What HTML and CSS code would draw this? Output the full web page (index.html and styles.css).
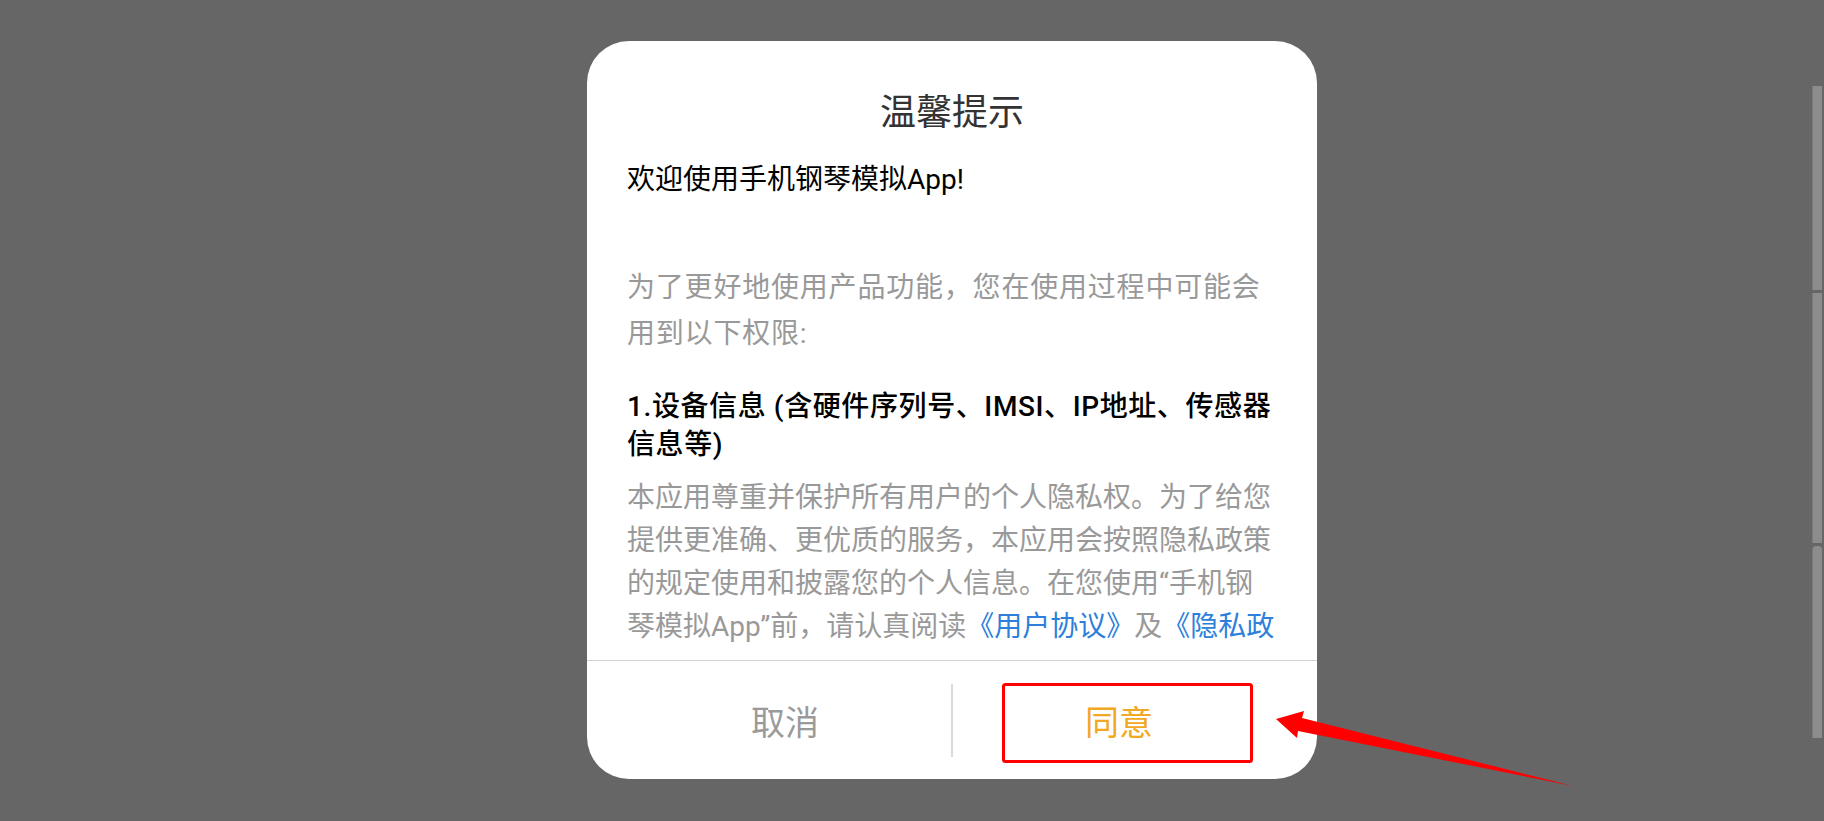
FILE: index.html
```html
<!DOCTYPE html>
<html lang="zh-CN">
  <head>
    <meta charset="UTF-8" />
    <meta name="viewport" content="width=device-width, initial-scale=1" />
    <title>温馨提示</title>
    <link rel="stylesheet" href="styles.css">
  </head>
  <body>
    <div class="screen">
      <div class="stage">
        <div class="dialog">
          <h2 class="dialog-title">温馨提示</h2>
          <div class="dialog-content">
            <p class="welcome">欢迎使用手机钢琴模拟App!</p>
            <p class="intro">为了更好地使用产品功能，您在使用过程中可能会用到以下权限:</p>
            <h3 class="perm-title">1.设备信息 (含硬件序列号、IMSI、IP地址、传感器信息等)</h3>
            <p class="perm-desc">本应用尊重并保护所有用户的个人隐私权。为了给您提供更准确、更优质的服务，本应用会按照隐私政策的规定使用和披露您的个人信息。在您使用“手机钢琴模拟App”前，请认真阅读<a href="#">《用户协议》</a>及<a href="#">《隐私政策》</a>全部条款，您同意并接受全部条款后再开始使用我们的服务。</p>
          </div>
          <div class="dialog-footer">
            <button class="btn btn-cancel" type="button">取消</button>
            <span class="divider"></span>
            <button class="btn btn-ok" type="button">同意</button>
          </div>
        </div>
      </div>
      <div class="rail">
        <span class="rail-seg seg-1"></span>
        <span class="rail-seg seg-2"></span>
        <span class="rail-seg seg-3"></span>
      </div>
    </div>

    <!-- marca roja sobre el botón -->
    <svg class="annotation" width="1824" height="821" viewBox="0 0 1824 821">
      <rect x="1003.5" y="684.5" width="248" height="77" rx="2" fill="none" stroke="#ff0000" stroke-width="3" />
      <polygon points="1276,719 1304,711 1302,718 1573,786 1298,731 1297,738" fill="#ff0000" />
    </svg>
  </body>
</html>
```

FILE: styles.css
```css
body {
  margin: 0;
  height: 821px;
  overflow: hidden;
  position: relative;
  background-color: #666666;
  font-family: Roboto, "Noto Sans CJK SC", sans-serif;
}
.screen {
  display: flex;
  height: 821px;
}
.stage {
  flex: 1;
  padding: 41px 0 0 587px;
}
.dialog {
  width: 730px;
  height: 738px;
  background-color: #fff;
  border-radius: 42px;
  display: flex;
  flex-direction: column;
  overflow: hidden;
}
.dialog-title {
  margin: 47px 0 0;
  font-size: 36px;
  line-height: 50px;
  font-weight: normal;
  text-align: center;
  color: #333;
}
.dialog-content {
  flex: 1;
  overflow: hidden;
  padding: 0 40px;
  margin-bottom: 15px;
}
.dialog-content p,
.dialog-content h3 {
  margin: 0;
  font-size: 28px;
}
.welcome {
  margin-top: 22px !important;
  line-height: 40px;
  color: #000;
}
.intro {
  margin-top: 65px !important;
  line-height: 46px;
  letter-spacing: 0.8px;
  color: #999;
}
.perm-title {
  margin-top: 31px !important;
  line-height: 38px;
  font-weight: 500;
  letter-spacing: 0.6px;
  color: #000;
}
.perm-desc {
  margin-top: 12px !important;
  line-height: 43px;
  color: #999;
}
.perm-desc a {
  color: #2d7fdb;
  text-decoration: none;
}
.dialog-footer {
  height: 119px;
  box-sizing: border-box;
  border-top: 1px solid #d2d2d2;
  display: flex;
  align-items: center;
}
.btn {
  flex: 1;
  height: 100%;
  background: none;
  border: none;
  font-family: inherit;
  font-size: 34px;
  cursor: pointer;
}
.btn-cancel {
  padding: 0 0 0 32px;
  color: #9a9a9a;
}
.btn-ok {
  padding: 0 32px 0 0;
  color: #f2a822;
}
.divider {
  width: 2px;
  height: 73px;
  background-color: #dadada;
}
.rail {
  width: 10px;
  margin-right: 2px;
  padding-top: 86px;
  display: flex;
  flex-direction: column;
  gap: 3px;
}
.rail-seg {
  display: block;
  background-color: #8c8c8c;
  border-left: 1px solid #7a7a7a;
}
.seg-1 {
  height: 204px;
}
.seg-2 {
  height: 250px;
}
.seg-3 {
  height: 192px;
  border-radius: 4px 4px 0 0;
}
.annotation {
  position: absolute;
  top: 0;
  left: 0;
  pointer-events: none;
}
```
